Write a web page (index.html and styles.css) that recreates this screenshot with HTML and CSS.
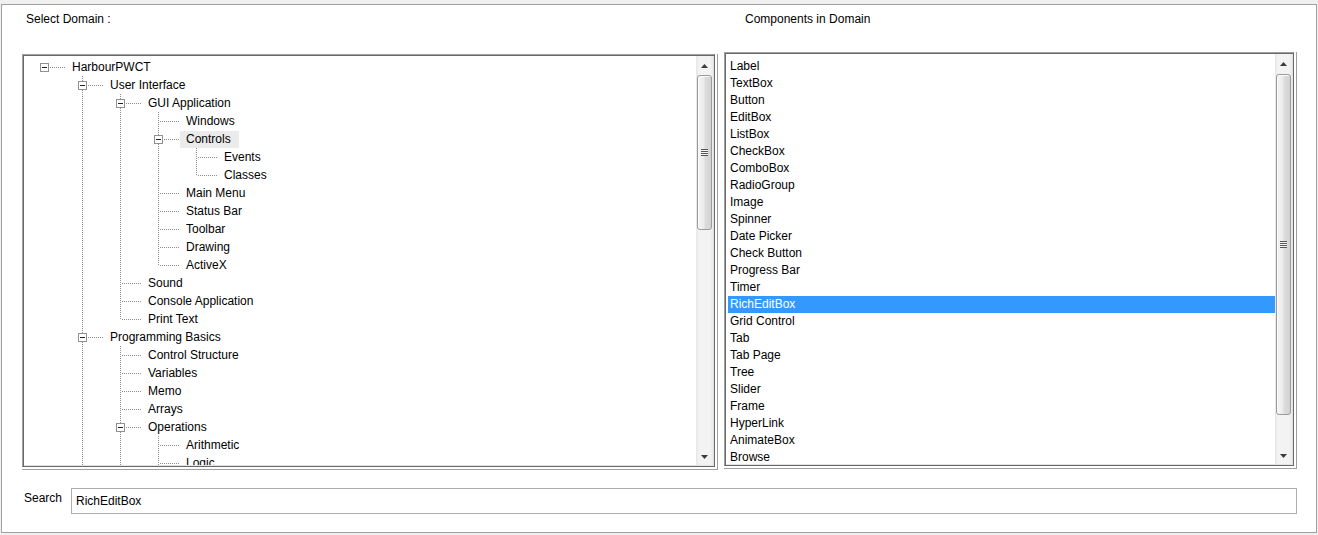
FILE: index.html
```html
<!DOCTYPE html>
<html>
<head>
<meta charset="utf-8">
<title>Components</title>
<link rel="stylesheet" href="styles.css">
</head>
<body>
<div class="window">
  <div class="title left">Select Domain :</div>
  <div class="title right">Components in Domain</div>

  <div class="frame lframe">
    <div class="box">
      <div class="tree">
        <div class="row"><span class="c n"><span class="bx"></span></span><span class="tx">HarbourPWCT</span></div>
        <div class="row"><span class="c"></span><span class="c t"><span class="bx"></span></span><span class="tx">User Interface</span></div>
        <div class="row"><span class="c"></span><span class="c v"></span><span class="c t"><span class="bx"></span></span><span class="tx">GUI Application</span></div>
        <div class="row"><span class="c"></span><span class="c v"></span><span class="c v"></span><span class="c t"></span><span class="tx">Windows</span></div>
        <div class="row"><span class="c"></span><span class="c v"></span><span class="c v"></span><span class="c t"><span class="bx"></span></span><span class="tx sel">Controls</span></div>
        <div class="row"><span class="c"></span><span class="c v"></span><span class="c v"></span><span class="c v"></span><span class="c t"></span><span class="tx">Events</span></div>
        <div class="row"><span class="c"></span><span class="c v"></span><span class="c v"></span><span class="c v"></span><span class="c l"></span><span class="tx">Classes</span></div>
        <div class="row"><span class="c"></span><span class="c v"></span><span class="c v"></span><span class="c t"></span><span class="tx">Main Menu</span></div>
        <div class="row"><span class="c"></span><span class="c v"></span><span class="c v"></span><span class="c t"></span><span class="tx">Status Bar</span></div>
        <div class="row"><span class="c"></span><span class="c v"></span><span class="c v"></span><span class="c t"></span><span class="tx">Toolbar</span></div>
        <div class="row"><span class="c"></span><span class="c v"></span><span class="c v"></span><span class="c t"></span><span class="tx">Drawing</span></div>
        <div class="row"><span class="c"></span><span class="c v"></span><span class="c v"></span><span class="c l"></span><span class="tx">ActiveX</span></div>
        <div class="row"><span class="c"></span><span class="c v"></span><span class="c t"></span><span class="tx">Sound</span></div>
        <div class="row"><span class="c"></span><span class="c v"></span><span class="c t"></span><span class="tx">Console Application</span></div>
        <div class="row"><span class="c"></span><span class="c v"></span><span class="c l"></span><span class="tx">Print Text</span></div>
        <div class="row"><span class="c"></span><span class="c t"><span class="bx"></span></span><span class="tx">Programming Basics</span></div>
        <div class="row"><span class="c"></span><span class="c v"></span><span class="c t"></span><span class="tx">Control Structure</span></div>
        <div class="row"><span class="c"></span><span class="c v"></span><span class="c t"></span><span class="tx">Variables</span></div>
        <div class="row"><span class="c"></span><span class="c v"></span><span class="c t"></span><span class="tx">Memo</span></div>
        <div class="row"><span class="c"></span><span class="c v"></span><span class="c t"></span><span class="tx">Arrays</span></div>
        <div class="row"><span class="c"></span><span class="c v"></span><span class="c t"><span class="bx"></span></span><span class="tx">Operations</span></div>
        <div class="row"><span class="c"></span><span class="c v"></span><span class="c v"></span><span class="c t"></span><span class="tx">Arithmetic</span></div>
        <div class="row"><span class="c"></span><span class="c v"></span><span class="c v"></span><span class="c t"></span><span class="tx">Logic</span></div>
      </div>
      <div class="sb">
        <div class="sb-btn up"><svg width="7" height="4" viewBox="0 0 7 4"><path d="M0 4 L3.5 0 L7 4Z" fill="#3c3c3c"/></svg></div>
        <div class="sb-thumb t-left"><span class="grip"></span></div>
        <div class="sb-space"></div>
        <div class="sb-btn down"><svg width="7" height="4" viewBox="0 0 7 4"><path d="M0 0 L3.5 4 L7 0Z" fill="#3c3c3c"/></svg></div>
      </div>
    </div>
  </div>

  <div class="frame rframe">
    <div class="box">
      <div class="list">
        <div class="item">Label</div>
        <div class="item">TextBox</div>
        <div class="item">Button</div>
        <div class="item">EditBox</div>
        <div class="item">ListBox</div>
        <div class="item">CheckBox</div>
        <div class="item">ComboBox</div>
        <div class="item">RadioGroup</div>
        <div class="item">Image</div>
        <div class="item">Spinner</div>
        <div class="item">Date Picker</div>
        <div class="item">Check Button</div>
        <div class="item">Progress Bar</div>
        <div class="item">Timer</div>
        <div class="item sel">RichEditBox</div>
        <div class="item">Grid Control</div>
        <div class="item">Tab</div>
        <div class="item">Tab Page</div>
        <div class="item">Tree</div>
        <div class="item">Slider</div>
        <div class="item">Frame</div>
        <div class="item">HyperLink</div>
        <div class="item">AnimateBox</div>
        <div class="item">Browse</div>
      </div>
      <div class="sb">
        <div class="sb-btn up"><svg width="7" height="4" viewBox="0 0 7 4"><path d="M0 4 L3.5 0 L7 4Z" fill="#3c3c3c"/></svg></div>
        <div class="sb-thumb t-right"><span class="grip"></span></div>
        <div class="sb-space"></div>
        <div class="sb-btn down"><svg width="7" height="4" viewBox="0 0 7 4"><path d="M0 0 L3.5 4 L7 0Z" fill="#3c3c3c"/></svg></div>
      </div>
    </div>
  </div>

  <div class="search">
    <div class="search-label">Search</div>
    <div class="search-input">RichEditBox</div>
  </div>
</div>
</body>
</html>
```

FILE: styles.css
```css
html, body {
  margin: 0;
  padding: 0;
}
body {
  background: #f0f0f0;
  font-family: "Liberation Sans", Arial, sans-serif;
  font-size: 12px;
  color: #000;
}
.window {
  margin: 4px 1px 0 1px;
  height: 527px;
  border: 1px solid #a0a0a0;
  background: #fff;
  display: grid;
  grid-template-columns: 696px 573px;
  grid-template-rows: auto auto auto;
  column-gap: 6px;
  padding-left: 20px;
  align-content: start;
  align-items: start;
}
.title {
  padding-top: 7px;
  height: 14px;
  line-height: 14px;
}
.title.left { padding-left: 4px; }
.title.right { padding-left: 21px; }

.frame {
  box-sizing: border-box;
  border-right: 1px solid #a0a0a0;
  border-bottom: 1px solid #a0a0a0;
  padding: 0 2px 2px 0;
}
.lframe { margin-top: 28px; height: 416px; }
.rframe { margin-top: 26px; height: 417px; }

.box {
  box-sizing: border-box;
  height: 100%;
  border: 1px solid;
  border-color: #a0a0a0 #696969 #696969 #a0a0a0;
  box-shadow: inset 1px 1px 0 #696969, inset -1px -1px 0 #e3e3e3;
  padding: 1px;
  display: flex;
  background: #fff;
}

/* tree */
.tree {
  flex: 1;
  overflow: hidden;
  padding: 2px 0 0 1px;
}
.row {
  display: flex;
  align-items: center;
  height: 18px;
  white-space: nowrap;
}
.c {
  flex: none;
  width: 38px;
  height: 18px;
  position: relative;
}
.c.v::before, .c.t::before, .c.l::before {
  content: "";
  position: absolute;
  left: 19px;
  top: 0;
  width: 1px;
  height: 18px;
  background: linear-gradient(to bottom, #8c8c8c 50%, transparent 50%) 0 0 / 1px 2px repeat-y;
}
.c.l::before { height: 9px; }
.c.t::after, .c.l::after, .c.n::after {
  content: "";
  position: absolute;
  left: 20px;
  top: 9px;
  width: 21px;
  height: 1px;
  background: linear-gradient(to right, transparent 50%, #8c8c8c 50%) 0 0 / 2px 1px repeat-x;
}
.bx {
  position: absolute;
  left: 15px;
  top: 5px;
  width: 9px;
  height: 9px;
  box-sizing: border-box;
  border: 1px solid #919191;
  background: #fff;
  z-index: 1;
}
.bx::after {
  content: "";
  position: absolute;
  left: 1px;
  top: 3px;
  width: 5px;
  height: 1px;
  background: #222;
}
.tx {
  margin-left: 3px;
  padding: 0 6px;
  line-height: 17px;
}
.tx.sel {
  background: #ebebeb;
  padding-right: 8px;
}

/* list */
.list {
  flex: 1;
  overflow: hidden;
  padding: 4px 0 0 2px;
}
.item {
  height: 17px;
  line-height: 17px;
  padding-left: 2px;
  white-space: nowrap;
}
.item.sel {
  background: #3399ff;
  color: #fff;
}

/* scrollbar */
.sb {
  flex: none;
  width: 17px;
  display: flex;
  flex-direction: column;
  background: linear-gradient(to right, #e6e6e6, #f3f3f3 3px, #f3f3f3 14px, #ebebeb);
}
.sb-btn {
  display: flex;
  align-items: center;
  justify-content: center;
  box-sizing: border-box;
  height: 17px;
  flex: none;
}
.sb-btn.up {
  height: 18px;
  padding-top: 2px;
}
.sb-thumb {
  flex: none;
  box-sizing: border-box;
  margin: 1px 1px 0 1px;
  border: 1px solid #9a9a9a;
  border-radius: 3px;
  background: linear-gradient(to right, #f5f5f5, #ebebeb 45%, #dcdcdc 55%, #d3d3d3);
  box-shadow: inset 1px 1px 0 #fbfbfb;
  display: flex;
  align-items: center;
  justify-content: center;
}
.t-left { height: 155px; }
.t-right { height: 341px; margin-top: 2px; }
.grip {
  width: 7px;
  height: 7px;
  background: repeating-linear-gradient(to bottom, #555 0 1px, #f6f6f6 1px 2px);
}
.sb-space { flex: 1; }

/* search */
.search {
  grid-column: 1 / -1;
  display: flex;
  align-items: flex-start;
  margin-top: 18px;
  padding-left: 2px;
}
.search-label {
  width: 47px;
  padding-top: 3px;
  line-height: 14px;
}
.search-input {
  box-sizing: border-box;
  width: 1226px;
  height: 26px;
  border: 1px solid #abadb3;
  padding-left: 4px;
  line-height: 24px;
}
```
